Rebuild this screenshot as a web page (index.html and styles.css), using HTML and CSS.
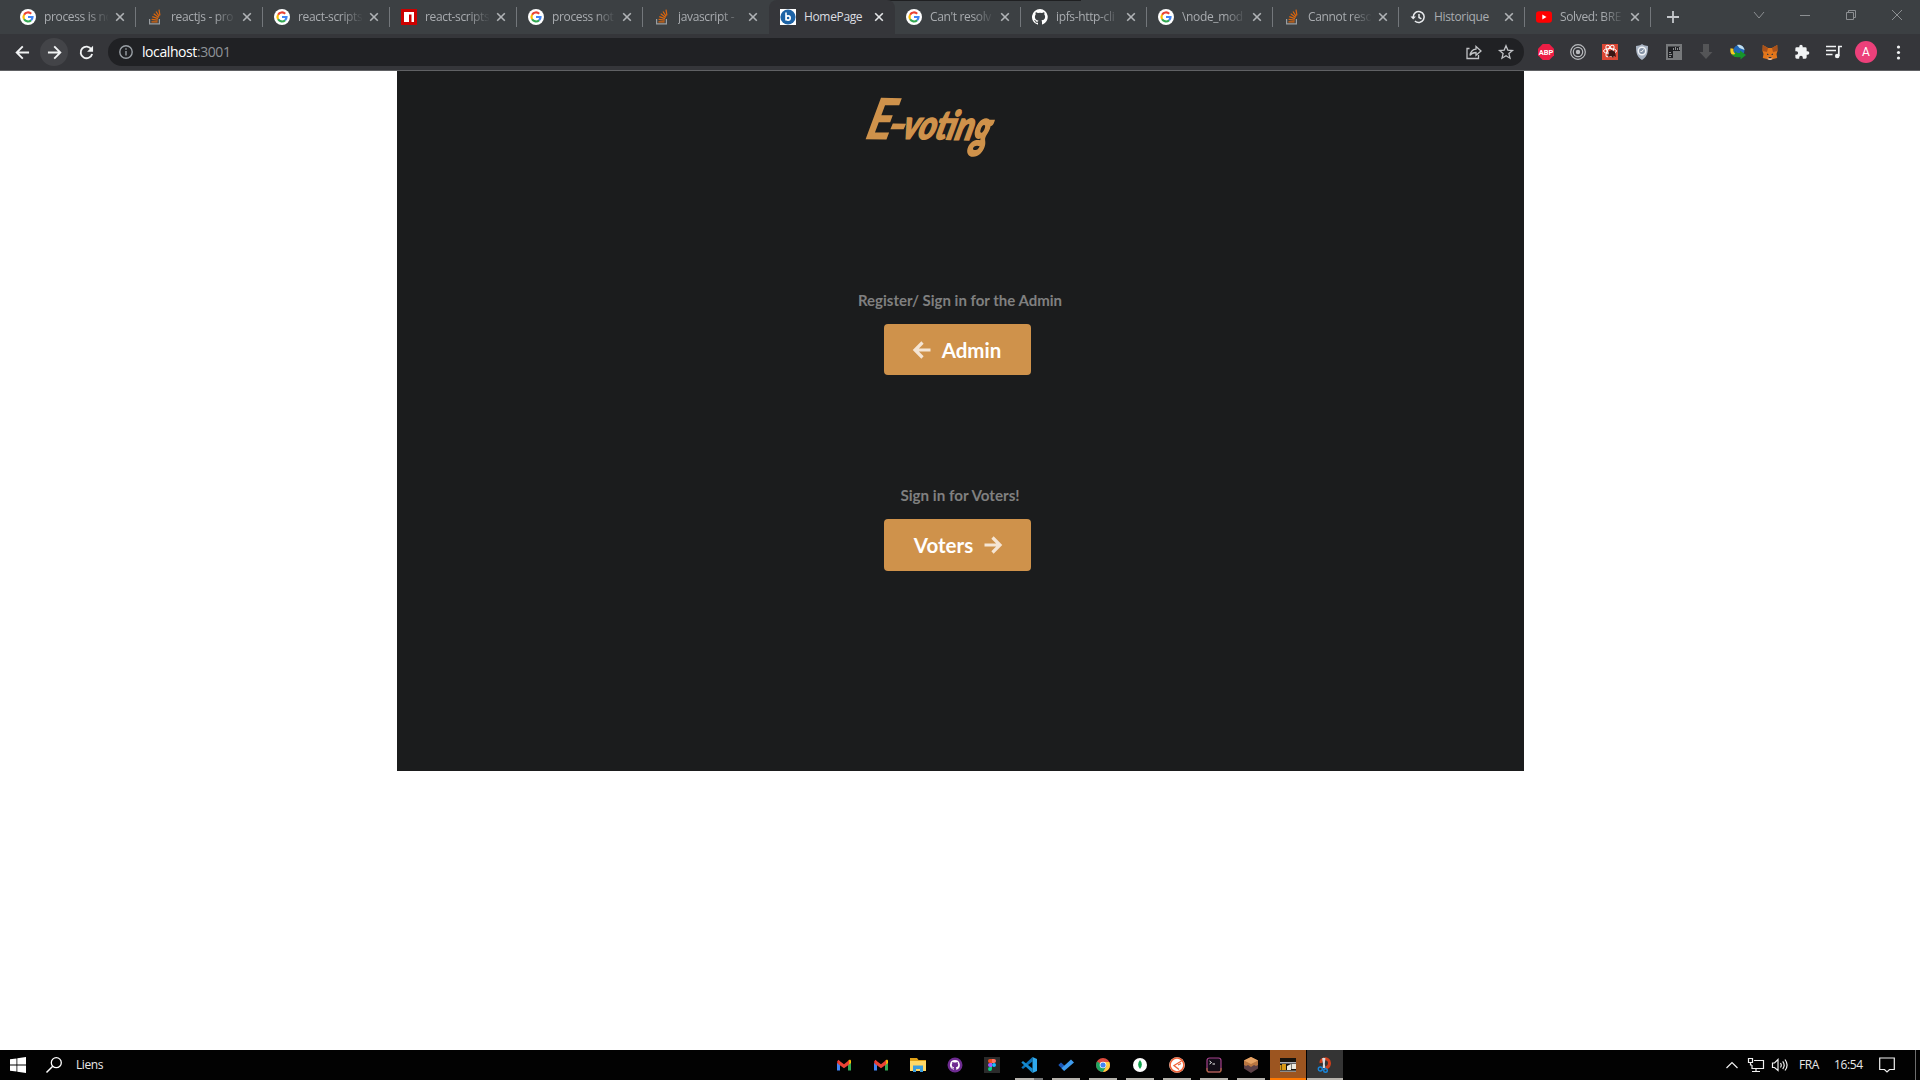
FILE: index.html
```html
<!DOCTYPE html>
<html lang="fr">
<head>
<meta charset="utf-8">
<title>HomePage</title>
<link rel="stylesheet" href="styles.css">
</head>
<body>
<svg class="sprite">
  <symbol id="google" viewBox="0 0 16 16"><circle cx="8" cy="8" r="8" fill="#fff"/><g fill="none" stroke-width="2.2"><path d="M4.1 5.7A4.5 4.5 0 0 1 11.2 4.8" stroke="#ea4335"/><path d="M4.1 5.7a4.6 4.6 0 0 0 0 4.6" stroke="#fbbc05"/><path d="M4.1 10.3a4.5 4.5 0 0 0 7 .9" stroke="#34a853"/><path d="M8 8h4.5a4.5 4.5 0 0 1-1.4 3.2" stroke="#4285f4"/></g></symbol>
  <symbol id="stack" viewBox="0 0 16 16"><path d="M2.6 10v4.9h9.8V10" fill="none" stroke="#9a9ea2" stroke-width="1.2"/><path d="M4.4 12.8h6.2M4.6 10.4l6.1.8M5.3 7.7l5.7 2M6.7 4.8l5 3.6M9 2.5l3.2 4.8M12 .7l.9 5.7" fill="none" stroke="#d9660f" stroke-width="1.25"/></symbol>
  <symbol id="octocat" viewBox="0 0 16 16"><path d="M8 0a8 8 0 0 0-2.5 15.6c.4.1.5-.2.5-.4v-1.5c-2 .4-2.600-.5-2.700-1-.1-.2-.5-.9-.8-1.100-.3-.1-.7-.5 0-.5.600 0 1.100.600 1.200.8.700 1.200 1.900.9 2.300.7.100-.5.300-.9.500-1.100-1.800-.2-3.600-.9-3.600-4 0-.9.300-1.600.8-2.100-.1-.2-.4-1 .1-2.100 0 0 .7-.2 2.200.8a7.500 7.500 0 0 1 4 0c1.500-1 2.200-.8 2.200-.8.4 1.100.2 1.900.1 2.100.5.6.8 1.300.8 2.100 0 3.100-1.900 3.700-3.700 3.900.3.300.6.8.6 1.500v2.200c0 .2.100.5.500.4A8 8 0 0 0 8 0z" fill="currentColor"/></symbol>
  <symbol id="x" viewBox="0 0 10 10"><path d="M1.200 1.200l7.600 7.600M8.800 1.200L1.200 8.800" fill="none" stroke="currentColor" stroke-width="1.600"/></symbol>
  <symbol id="gmail" viewBox="0 0 16 16"><path d="M1 5v8.500h3V7z" fill="#4285f4"/><path d="M12 7v6.500h3V5z" fill="#34a853"/><path d="M1 4.200V6l3 2.300V4.200L2.500 3z" fill="#c5221f"/><path d="M12 4.200v4.100L15 6V4c0-1.300-1.200-1.700-2-1z" fill="#fbbc04"/><path d="M2 2.700L8 7.200 13.200 3v4.400L8 11.200 2.200 7z" fill="#ea4335"/></symbol>
</svg>

<header class="browser">
  <div class="tabstrip">
    <div class="tab wide"><svg class="fav"><use href="#google"/></svg><span class="title">process is no</span><svg class="close"><use href="#x"/></svg></div>
    <div class="tab wide"><svg class="fav"><use href="#stack"/></svg><span class="title">reactjs - pro</span><svg class="close"><use href="#x"/></svg></div>
    <div class="tab wide"><svg class="fav"><use href="#google"/></svg><span class="title">react-scripts</span><svg class="close"><use href="#x"/></svg></div>
    <div class="tab wide"><svg class="fav" viewBox="0 0 16 16"><path fill="#c00" d="M0 0h16v16H0z"/><path fill="#fff" d="M3 3h10v10h-2.500V5.500H8V13H3z"/></svg><span class="title">react-scripts</span><svg class="close"><use href="#x"/></svg></div>
    <div class="tab"><svg class="fav"><use href="#google"/></svg><span class="title">process not</span><svg class="close"><use href="#x"/></svg></div>
    <div class="tab before"><svg class="fav"><use href="#stack"/></svg><span class="title">javascript -</span><svg class="close"><use href="#x"/></svg></div>
    <div class="tab active"><svg class="fav" viewBox="0 0 16 16"><path fill="#fff" d="M0 0h16v16H0z"/><circle cx="8" cy="8" r="7.600" fill="#1d63a6"/><path d="M6 3.500v8M6 9a2.100 2.100 0 1 1 4.200 0A2.100 2.100 0 0 1 6 9" fill="none" stroke="#fff" stroke-width="1.600"/></svg><span class="title">HomePage</span><svg class="close"><use href="#x"/></svg></div>
    <div class="tab"><svg class="fav"><use href="#google"/></svg><span class="title">Can't resolv</span><svg class="close"><use href="#x"/></svg></div>
    <div class="tab"><svg class="fav light"><use href="#octocat"/></svg><span class="title">ipfs-http-cli</span><svg class="close"><use href="#x"/></svg></div>
    <div class="tab"><svg class="fav"><use href="#google"/></svg><span class="title">\node_mod</span><svg class="close"><use href="#x"/></svg></div>
    <div class="tab"><svg class="fav"><use href="#stack"/></svg><span class="title">Cannot reso</span><svg class="close"><use href="#x"/></svg></div>
    <div class="tab"><svg class="fav" viewBox="0 0 16 16"><path d="M3.200 8a5.500 5.500 0 1 1 1.700 4M9 5v3.500l2.400 1.400" fill="none" stroke="#e8eaed" stroke-width="1.500"/><path d="M.5 7.500h5.400L3.200 10.500z" fill="#e8eaed"/></svg><span class="title full">Historique</span><svg class="close"><use href="#x"/></svg></div>
    <div class="tab"><svg class="fav" viewBox="0 0 16 16"><rect y="2.300" width="16" height="11.400" rx="3" fill="#f00"/><path fill="#fff" d="M6.300 5.500L10.500 8l-4.200 2.500z"/></svg><span class="title">Solved: BRE</span><svg class="close"><use href="#x"/></svg></div>
    <svg class="newtab" viewBox="0 0 12 12"><path d="M6 0v12M0 6h12" stroke="#c4c7cb" stroke-width="1.800"/></svg>
    <div class="winctl">
      <svg viewBox="0 0 12 12"><path d="M1 3l5 6 5-6"/></svg>
      <svg viewBox="0 0 12 12"><path d="M1 6.500h10"/></svg>
      <svg viewBox="0 0 12 12"><path d="M1.500 3.500h7v7h-7zM3.500 3.500v-2h7v7h-2"/></svg>
      <svg viewBox="0 0 12 12"><path d="M1 1l10 10M11 1L1 11"/></svg>
    </div>
  </div>
  <div class="toolbar">
    <div class="nav">
      <span class="navbtn"><svg viewBox="0 0 16 16"><path d="M15 8H2M8.300 1.500L1.800 8l6.500 6.500"/></svg></span>
      <span class="navbtn hover"><svg viewBox="0 0 16 16"><path d="M1 8h13M7.700 1.500L14.200 8l-6.500 6.500"/></svg></span>
      <span class="navbtn"><svg viewBox="0 0 16 16"><path d="M13.200 4.500A6.200 6.200 0 1 0 14 9.500"/><path class="solid" d="M15 .8v6.400H8.600z"/></svg></span>
    </div>
    <div class="omnibox">
      <svg class="info" viewBox="0 0 14 14"><circle cx="7" cy="7" r="6.200"/><path d="M7 6v4.500M7 3.300v1.500"/></svg>
      <span class="url">localhost<i>:3001</i></span>
      <svg class="act" viewBox="0 0 16 16"><path d="M3.500 4.500H1v10h11.500V11M4 11.500c.6-4 2.500-6 6-6.300V2.500L15 7l-5 4.300V8.500c-3 0-4.700 1-6 3z"/></svg>
      <svg class="act" viewBox="0 0 16 16"><path d="M8 1.800l1.800 4.300 4.700.4-3.600 3.100 1.100 4.600L8 11.700l-4 2.500 1.100-4.600-3.600-3.100 4.700-.4z"/></svg>
    </div>
    <div class="exts">
      <span><svg viewBox="0 0 16 16"><path d="M4.700 0h6.600L16 4.700v6.600L11.300 16H4.700L0 11.300V4.700z" fill="#ed1e45"/><text x="8" y="10.600" class="abp">ABP</text></svg></span>
      <span><svg viewBox="0 0 16 16" fill="none" stroke="#b9bbbe" stroke-width="1.200"><circle cx="8" cy="8" r="7.300"/><circle cx="8" cy="8" r="4.700"/><circle cx="8" cy="8" r="1.600" fill="#b9bbbe"/></svg></span>
      <span><svg viewBox="0 0 16 16"><path d="M0 0h16v16H0z" fill="#dc4734"/><g fill="none" stroke="#fff"><ellipse cx="8" cy="7" rx="6.500" ry="2.500"/><ellipse cx="8" cy="7" rx="6.500" ry="2.500" transform="rotate(60 8 7)"/><ellipse cx="8" cy="7" rx="6.500" ry="2.500" transform="rotate(120 8 7)"/></g><path d="M7 7l3-1 3 2 1 5-2-1-1 2-2-2-3 1z" fill="#3b1613"/></svg></span>
      <span><svg viewBox="0 0 16 16"><path d="M8 0c2 1.500 4 1.800 6 2 0 7-1 11-6 14C3 13 2 9 2 2c2-.2 4-.5 6-2z" fill="#a9b4c3"/><circle cx="8" cy="7" r="3.700" fill="#8492a5" stroke="#f1f4f7" stroke-width="1.500"/><path d="M6.500 7l1 1 2-2.500" fill="none" stroke="#fff"/></svg></span>
      <span><svg viewBox="0 0 16 16"><path d="M0 0h16v16H0z" fill="#77797b"/><path d="M2 2.500h12V7H7v7H2z" fill="#202124"/><path d="M7.500 4v2M9.500 3v3M11.500 4v2M13.500 3v3M3 8.500h2M3 10.500h3M3 12.500h2" stroke="#8c8e90"/></svg></span>
      <span><svg viewBox="0 0 16 16"><path d="M5 0h6v8h3.500L8 15 1.500 8H5z" fill="#545557"/></svg></span>
      <span><svg viewBox="0 0 16 16"><circle cx="9" cy="6.500" r="5.500" fill="#1f67b7"/><path d="M7 1c4-1 7 2 7.500 5l-5-2z" fill="#c3dfed"/><path d="M2 4.500C1 9 4 12.500 10 11" fill="none" stroke="#f5cd21" stroke-width="3"/><path d="M5 6.500c1 3 4 2.500 5 2.500V6.500L16 11l-5.500 4.500V13C6 14 3 12.500 1.500 10c4 1.500 4 0 3.500-3.500z" fill="#17952a"/></svg></span>
      <span><svg viewBox="0 0 16 16"><path d="M.8 1L6 4h4l5.200-3 .3 6-1 3 .7 4-4 1-2 1H6.800l-2-1-4-1 .7-4-1-3z" fill="#e2761b"/><path d="M.8 1L6 4l-1 4-4.500-1zM15.200 1L10 4l1 4 4.500-1z" fill="#a9521b"/><path d="M5 9.500l2 1-2 .5zM11 9.500l-2 1 2 .5zM6.500 13h3l-.5 1H7z" fill="#233447"/><path d="M5 13l1.800 3h2.400l1.800-3-1.500 1.500h-3z" fill="#d5bfb2"/></svg></span>
      <span><svg viewBox="0 0 24 24"><path d="M20.500 11H19V7a2 2 0 0 0-2-2h-4V3.500a2.500 2.500 0 0 0-5 0V5H4a2 2 0 0 0-2 2v3.800h1.500a2.700 2.700 0 0 1 0 5.400H2V20a2 2 0 0 0 2 2h3.800v-1.500a2.700 2.700 0 0 1 5.400 0V22H17a2 2 0 0 0 2-2v-4h1.500a2.500 2.500 0 0 0 0-5z" fill="#f1f3f4"/></svg></span>
      <span><svg viewBox="0 0 16 16"><path d="M0 2.500h10M0 6.500h10M0 10.500h6.500M12.800 12V2.500H16" fill="none" stroke="#f1f3f4" stroke-width="1.700"/><circle cx="11.200" cy="12" r="2.300" fill="#f1f3f4"/></svg></span>
      <span><b class="avatar">A</b></span>
      <span><svg viewBox="0 0 16 16" fill="#f1f3f4"><circle cx="8.500" cy="3" r="1.600"/><circle cx="8.500" cy="8.500" r="1.600"/><circle cx="8.500" cy="14" r="1.600"/></svg></span>
    </div>
  </div>
</header>

<main class="page">
  <section class="container">
    <h1 class="logo"><span class="cap">E</span><span class="dash">-</span>votin<span class="tail">g</span></h1>
    <div class="entry admin">
      <p>Register/ Sign in for the Admin</p>
      <button class="btn"><svg viewBox="0 0 18 18"><path d="M18 9H3M10 1.500L2.500 9l7.500 7.500"/></svg>Admin</button>
    </div>
    <div class="entry voters">
      <p>Sign in for Voters!</p>
      <button class="btn">Voters<svg viewBox="0 0 18 18"><path d="M0 9h15M8 1.500L15.500 9 8 16.500"/></svg></button>
    </div>
  </section>
</main>

<footer class="taskbar">
  <div class="start">
    <svg viewBox="0 0 16 16"><path d="M0 2.300l6.500-.9v6.100H0zM7.300 1.200L16 0v7.500H7.300zM0 8.400h6.500v6.200L0 13.700zM7.300 8.400H16V16l-8.700-1.200z" fill="#fff"/></svg>
    <svg viewBox="0 0 16 16"><circle cx="10.300" cy="5.700" r="5" fill="none" stroke="#fff" stroke-width="1.300"/><path d="M6.700 9.300L.5 15.500" stroke="#fff" stroke-width="1.500"/></svg>
    <span>Liens</span>
  </div>
  <div class="apps">
    <span><svg><use href="#gmail"/></svg></span>
    <span><svg><use href="#gmail"/></svg></span>
    <span><svg viewBox="0 0 16 16"><path d="M0 1h7l1.500 2H16v11H0z" fill="#e0a117"/><path d="M0 4h16v10H0z" fill="#ffd866"/><path d="M3 15V8.500h10V15h-3v-3H6v3z" fill="#3b9ddd"/></svg></span>
    <span><svg viewBox="0 0 16 16"><circle cx="8" cy="8" r="7.500" fill="#6e2b91"/><svg x="3" y="3" width="10" height="10" class="light"><use href="#octocat"/></svg></svg></span>
    <span><svg viewBox="0 0 16 16"><path d="M0 0h16v16H0z" fill="#2b2b2b"/><path d="M8 2H6a2 2 0 0 0 0 4h2z" fill="#f24e1e"/><path d="M8 2h2a2 2 0 0 1 0 4H8z" fill="#ff7262"/><path d="M8 6H6a2 2 0 0 0 0 4h2z" fill="#a259ff"/><circle cx="10" cy="8" r="2" fill="#1abcfe"/><path d="M8 10H6a2 2 0 1 0 2 2z" fill="#0acf83"/></svg></span>
    <span class="run split"><svg viewBox="0 0 16 16"><path d="M11.500 0v4.500L2 12 .3 10.500z" fill="#0b72b8"/><path d="M11.500 16v-4.500L2 4 .3 5.500z" fill="#168bd0"/><path d="M11.500 0L16 2v12l-4.500 2z" fill="#2fa8ec"/></svg></span>
    <span class="run"><svg viewBox="0 0 16 16"><path d="M.3 8L3 5.500 8 10 5.700 13.500z" fill="#1857b8"/><path d="M3.500 11.300L13 2.500 16 5.500 6.200 14z" fill="#3f9cee"/></svg></span>
    <span class="run"><svg viewBox="0 0 16 16"><circle cx="8" cy="8" r="7" fill="#dd4b3e"/><path d="M8 8L2 4.500A7 7 0 0 0 8 15l3-5z" fill="#1da462"/><path d="M8 5h6.300A7 7 0 0 1 8 15l3.500-6z" fill="#ffcd40"/><circle cx="8" cy="8" r="3.300" fill="#fff"/><circle cx="8" cy="8" r="2.600" fill="#4285f4"/></svg></span>
    <span class="run"><svg viewBox="0 0 16 16"><circle cx="8" cy="8" r="7" fill="#fff"/><path d="M8 3c2.500 3 2.500 6 0 9-2.500-3-2.500-6 0-9z" fill="#10a34d"/></svg></span>
    <span class="run"><svg viewBox="0 0 16 16"><circle cx="8" cy="8" r="7.800" fill="#fff"/><circle cx="8" cy="8" r="6.900" fill="none" stroke="#ef6237" stroke-width="1.500"/><path d="M12.500 4L5 8.500l5 4M9 8l3-1.500" fill="none" stroke="#ef6237" stroke-width="1.300"/></svg></span>
    <span class="run"><svg viewBox="0 0 16 16"><rect x="1" y="1" width="14" height="14" rx="2.500" fill="#120c17" stroke="#a5418b" stroke-width="1.200"/><path d="M1 11v2q0 2 2 2h10q2 0 2-2v-2" fill="none" stroke="#a9663d" stroke-width="1.200"/><path d="M3.500 4l2 1.500-2 1.500M6.500 7h2.500" fill="none" stroke="#eee"/></svg></span>
    <span class="run"><svg viewBox="0 0 16 16"><path d="M8 0l7 3.500v8L8 16l-7-4.500v-8z" fill="#5c4147"/><path d="M8 0l7 3.500V8l-2 1-2-1-3 2-3-2-2 1-2-1V3.500z" fill="#b97641"/><path d="M8 0l7 3.500L8 7 1 3.500z" fill="#e5a263"/></svg></span>
    <span class="attention"><svg viewBox="0 0 16 16"><path d="M0 1h16v14H0z" fill="#17130d"/><path d="M0 5h16v1.500H0z" fill="#aeb1b8"/><path d="M0 8h1.500v5H0zM2 7h4v6H2z" fill="#d79816"/><path d="M7 9l4-2v6H7zM11.500 7H16v5h-4.500z" fill="#ece9df"/><path d="M0 13.500h16V15H0z" fill="#8f8d89"/></svg></span>
    <span class="current"><svg viewBox="0 0 16 16"><path d="M4 6c-1-5 8-6 8.500 0 0 3-1.500 4.500-3.500 5" fill="none" stroke="#d13f1c" stroke-width="3"/><path d="M6 1l1.500 10M7.500 1L6.500 11" stroke="#d7dce1" stroke-width="1.800"/><circle cx="3.300" cy="12" r="2" fill="none" stroke="#1786dc" stroke-width="1.400"/><circle cx="8.500" cy="13.500" r="1.800" fill="none" stroke="#1786dc" stroke-width="1.400"/></svg></span>
  </div>
  <div class="tray">
    <svg class="up" viewBox="0 0 12 12"><path d="M.5 9L6 3.500 11.500 9"/></svg>
    <svg class="net" viewBox="0 0 16 16"><path d="M6 3.500h9.500v8H4V8M4 14.500h8M8 11.500v3M.5 1.500h4v4h-4zM2.500 5.500V8H4"/></svg>
    <svg class="vol" viewBox="0 0 16 16"><path d="M.5 6v4.500h2L6 13.500v-11L2.500 6zM8.500 6q1.500 2.300 0 4.500M10.700 4.300q3 4 0 7.700M13 2.500q4.200 5.700 0 11"/></svg>
    <span class="lang">FRA</span>
    <span class="clock">16:54</span>
    <svg class="note" viewBox="0 0 16 16"><path d="M.7 1h14.600v11.500h-4.800L8 15l-2.500-2.500H.7z"/></svg>
  </div>
</footer>
</body>
</html>
```
FILE: styles.css
```css
* { box-sizing: border-box; }
body {
  margin: 0;
  width: 1920px;
  height: 1080px;
  overflow: hidden;
  display: flex;
  flex-direction: column;
  background: #fff;
  font-family: "Open Sans", sans-serif;
}
svg { display: block; flex: none; overflow: visible; }
.sprite { display: none; }
.light { color: #fff; }

.browser { flex: none; height: 71px; background: #35363a; border-bottom: 1px solid #606164; }
.tabstrip {
  display: flex;
  align-items: center;
  height: 34px;
  padding-left: 9px;
  background: linear-gradient(#1f2022, #1f2022) 840px 0 / 241px 1px no-repeat, #3c4043;
}
.tab {
  position: relative;
  display: flex;
  align-items: center;
  width: 126px;
  height: 34px;
  padding-left: 11px;
  color: #a9acb0;
}
.tab.wide { width: 127px; }
.tab::after {
  content: "";
  position: absolute;
  right: 0;
  top: 7px;
  width: 1px;
  height: 20px;
  background: #73777b;
}
.tab.before::after, .tab.active::after { display: none; }
.tab.active { background: #35363a; border-radius: 8px 8px 0 0; color: #dcdee1; }
.fav { width: 16px; height: 16px; margin-right: 8px; }
.title {
  width: 63px;
  overflow: hidden;
  white-space: nowrap;
  font-size: 12px;
  line-height: 18px;
  letter-spacing: -0.35px;
  -webkit-mask-image: linear-gradient(90deg, #000 68%, transparent 102%);
  mask-image: linear-gradient(90deg, #000 68%, transparent 102%);
}
.wide .title { width: 64px; }
.title.full, .active .title { -webkit-mask-image: none; mask-image: none; }
.close { width: 10px; height: 10px; margin-left: 7px; color: #b0b3b6; }
.active .close { color: #e4e6e8; }
.newtab { width: 12px; height: 12px; margin-left: 16px; }
.winctl { display: flex; gap: 34px; margin: 0 17px 5px auto; }
.winctl svg { width: 12px; height: 12px; fill: none; stroke: #8c8f92; }

.toolbar { display: flex; align-items: center; height: 36px; }
.nav { display: flex; gap: 4px; width: 108px; padding-left: 8px; }
.navbtn { display: flex; align-items: center; justify-content: center; width: 28px; height: 28px; border-radius: 50%; }
.navbtn.hover { background: #434448; }
.navbtn svg { width: 15px; height: 15px; fill: none; stroke: #f1f3f4; stroke-width: 2; }
.navbtn .solid { fill: #f1f3f4; stroke: none; }
.omnibox {
  display: flex;
  align-items: center;
  width: 1416px;
  height: 28px;
  padding: 0 10px 0 11px;
  border-radius: 14px;
  background: #202124;
}
.info { width: 14px; height: 14px; fill: none; stroke: #9aa0a6; stroke-width: 1.4; }
.url { margin: 0 auto 0 9px; color: #fff; font-size: 14px; line-height: 20px; letter-spacing: -0.42px; }
.url i { font-style: normal; color: #8f9398; }
.act { width: 16px; height: 16px; margin-left: 16px; fill: none; stroke: #c1c3c6; stroke-width: 1.3; }
.exts { display: flex; padding-left: 6px; }
.exts span { display: flex; align-items: center; justify-content: center; width: 32px; height: 28px; }
.exts svg { width: 16px; height: 16px; }
.abp { font: 700 7.500px Roboto, sans-serif; fill: #fff; text-anchor: middle; }
.avatar {
  width: 22px;
  height: 22px;
  border-radius: 50%;
  background: #ec407a;
  color: #fff;
  font: 400 12px/22px Roboto, sans-serif;
  text-align: center;
}

.page { flex: 1; display: flex; justify-content: center; align-items: flex-start; }
.container {
  display: flex;
  flex-direction: column;
  align-items: center;
  width: 1127px;
  height: 700px;
  background: #1b1c1d;
  font-family: Lato, sans-serif;
}
.logo {
  height: 70px;
  margin: 13px 56px 0 0;
  color: #cf924b;
  font: italic 700 40px/70px Lato, sans-serif;
  white-space: nowrap;
  -webkit-text-stroke: 1.8px #cf924b;
  transform: rotate(1deg) skewX(-14deg) scaleX(0.83);
}
.cap { font-size: 54px; font-weight: 400; -webkit-text-stroke-width: 3px; }
.dash { display: inline-block; transform: scaleX(1.4); }
.tail { display: inline-block; transform: scaleY(1.3); transform-origin: 50% 40%; }
.entry { display: flex; flex-direction: column; align-items: center; height: 195px; }
.entry.admin { margin-top: 136px; }
.entry p { margin: 0; color: #808080; font-weight: 700; font-size: 15px; line-height: 20px; white-space: nowrap; }
.voters p { font-size: 15.2px; }
.btn {
  display: flex;
  align-items: center;
  justify-content: center;
  gap: 11px;
  width: 147px;
  height: 51px;
  margin: 14px 5px 0 0;
  padding: 0 2px 0 0;
  border: 0;
  border-radius: 4px;
  background: #cf924b;
  color: #fff;
  font: 700 20.5px/24px Lato, sans-serif;
}
.voters .btn { height: 52px; padding: 0 0 0 2px; }
.btn svg { width: 19px; height: 18px; fill: none; stroke: #f5e5d4; stroke-width: 3.2; }

.taskbar { flex: none; display: flex; align-items: center; height: 30px; background: #020202; color: #e8e8e8; font-size: 12px; letter-spacing: -0.4px; }
.start { display: flex; align-items: center; gap: 20px; width: 826px; padding-left: 10px; }
.start svg { width: 16px; height: 16px; }
.start span { margin-left: -6px; padding-bottom: 2px; }
.apps { display: flex; gap: 1px; }
.apps > span { display: flex; align-items: center; justify-content: center; width: 36px; height: 30px; }
.apps > span > svg { width: 16px; height: 16px; }
.run { background: linear-gradient(#b5b2ac, #b5b2ac) 4px 28px / 28px 2px no-repeat; }
.run.split { background: linear-gradient(90deg, #b5b2ac 19px, #777 19px) 4px 28px / 28px 2px no-repeat; }
.attention { background: linear-gradient(#ff7800, #ff7800) 0 28px / 36px 2px no-repeat, #9c5520; }
.current { background: linear-gradient(#b5b2ac, #b5b2ac) 0 28px / 36px 2px no-repeat, #343434; }
.tray { display: flex; align-items: center; height: 30px; margin: 0 4px 0 auto; padding-right: 20px; border-right: 1px solid #6d6d6d; }
.tray svg { width: 16px; height: 16px; fill: none; stroke: #f0f0f0; stroke-width: 1.2; }
.tray .up { width: 12px; height: 12px; }
.tray .net { margin-left: 10px; }
.tray .vol { margin: 0 11px 0 8px; }
.tray span { padding-bottom: 2px; }
.lang { width: 35px; }
.clock { width: 45px; }
```
